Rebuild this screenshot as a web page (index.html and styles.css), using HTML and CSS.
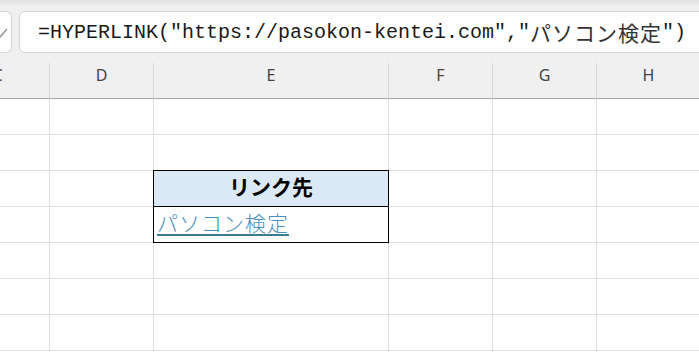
FILE: index.html
```html
<!DOCTYPE html>
<html lang="ja">

<head>
    <meta charset="UTF-8">
    <meta name="viewport" content="width=device-width, initial-scale=1.0">
    <title>HYPERLINK</title>
    <link rel="stylesheet" href="styles.css">
</head>

<body>

    <div class="toolbar">
        <div class="namebox">
            <svg class="check" width="12" height="14" viewBox="0 0 12 14">
                <polyline points="-4,4 3,11 10,3" fill="none" stroke="#9a9a9a" stroke-width="1.6" />
            </svg>
        </div>
        <div class="formula">=HYPERLINK("https://pasokon-kentei.com","<span class="jp">パソコン検定</span>")</div>
    </div>

    <div class="sheet">
        <div class="row head">
            <div class="col">C</div>
            <div class="col">D</div>
            <div class="col">E</div>
            <div class="col">F</div>
            <div class="col">G</div>
            <div class="col">H</div>
        </div>
        <div class="row">
            <div class="cell"></div><div class="cell"></div><div class="cell"></div>
            <div class="cell"></div><div class="cell"></div><div class="cell"></div>
        </div>
        <div class="row">
            <div class="cell"></div><div class="cell"></div><div class="cell"></div>
            <div class="cell"></div><div class="cell"></div><div class="cell"></div>
        </div>
        <div class="row">
            <div class="cell"></div><div class="cell"></div>
            <div class="cell boxed title">リンク先</div>
            <div class="cell"></div><div class="cell"></div><div class="cell"></div>
        </div>
        <div class="row">
            <div class="cell"></div><div class="cell"></div>
            <div class="cell boxed"><a class="link" href="https://pasokon-kentei.com">パソコン検定</a></div>
            <div class="cell"></div><div class="cell"></div><div class="cell"></div>
        </div>
        <div class="row">
            <div class="cell"></div><div class="cell"></div><div class="cell"></div>
            <div class="cell"></div><div class="cell"></div><div class="cell"></div>
        </div>
        <div class="row">
            <div class="cell"></div><div class="cell"></div><div class="cell"></div>
            <div class="cell"></div><div class="cell"></div><div class="cell"></div>
        </div>
        <div class="row">
            <div class="cell"></div><div class="cell"></div><div class="cell"></div>
            <div class="cell"></div><div class="cell"></div><div class="cell"></div>
        </div>
        <div class="row">
            <div class="cell"></div><div class="cell"></div><div class="cell"></div>
            <div class="cell"></div><div class="cell"></div><div class="cell"></div>
        </div>
    </div>

</body>

</html>
```

FILE: styles.css
```css
body {
    margin: 0;
    font-family: "Noto Sans", "Noto Sans CJK JP", sans-serif;
    background-color: #fff;
    overflow: hidden;
}

.toolbar {
    display: flex;
    gap: 7px;
    padding: 11px 0 10px;
    background: linear-gradient(#e2e2e2, #f0f0f0 7px);
    overflow: hidden;
}

.namebox {
    width: 11px;
    height: 40px;
    flex-shrink: 0;
    background-color: #fff;
    border: 1px solid #d4d4d4;
    border-left: none;
    border-radius: 0 6px 6px 0;
    display: flex;
    align-items: center;
}

.check {
    margin-left: -3px;
    margin-top: 1px;
}

.formula {
    flex-shrink: 0;
    width: 720px;
    height: 40px;
    background-color: #fff;
    border: 1px solid #d4d4d4;
    border-radius: 6px;
    padding-left: 18px;
    display: flex;
    align-items: center;
    font-family: "Liberation Mono", "Noto Sans CJK JP", monospace;
    font-size: 20px;
    color: #1a1a1a;
    white-space: pre;
}

.formula .jp {
    font-family: "Noto Sans CJK JP", sans-serif;
    font-size: 21px;
    letter-spacing: 1px;
    color: #333;
}

.sheet {
    margin-left: -54px;
}

.row {
    display: grid;
    grid-template-columns: 104px 104px 235px 104px 104px 104px;
}

.col {
    line-height: 25px;
    box-sizing: border-box;
    padding-bottom: 10px;
    height: 36px;
    text-align: center;
    font-size: 16px;
    color: #444;
    background-color: #f0f0f0;
    border-right: 1px solid #d9d9d9;
    border-bottom: 1px solid #a9a9a9;
}

.cell {
    height: 36px;
    box-sizing: border-box;
    border-right: 1px solid #dedede;
    border-bottom: 1px solid #dedede;
}

.cell.boxed {
    border-color: #000;
    box-shadow: -1px 0 0 #000, 0 -1px 0 #000, -1px -1px 0 #000;
}

.title {
    background-color: #dbe9f7;
    text-align: center;
    font-family: "Noto Sans CJK JP", sans-serif;
    font-weight: bold;
    font-size: 21px;
    line-height: 30px;
    color: #000;
}

.link {
    display: inline-block;
    padding-left: 3px;
    font-family: "Noto Sans CJK JP", sans-serif;
    font-weight: 300;
    font-size: 21px;
    letter-spacing: 1px;
    line-height: 31px;
    color: #4a8fb8;
    text-decoration: underline;
    text-decoration-color: #3b7c92;
    text-underline-offset: 3px;
}
```
